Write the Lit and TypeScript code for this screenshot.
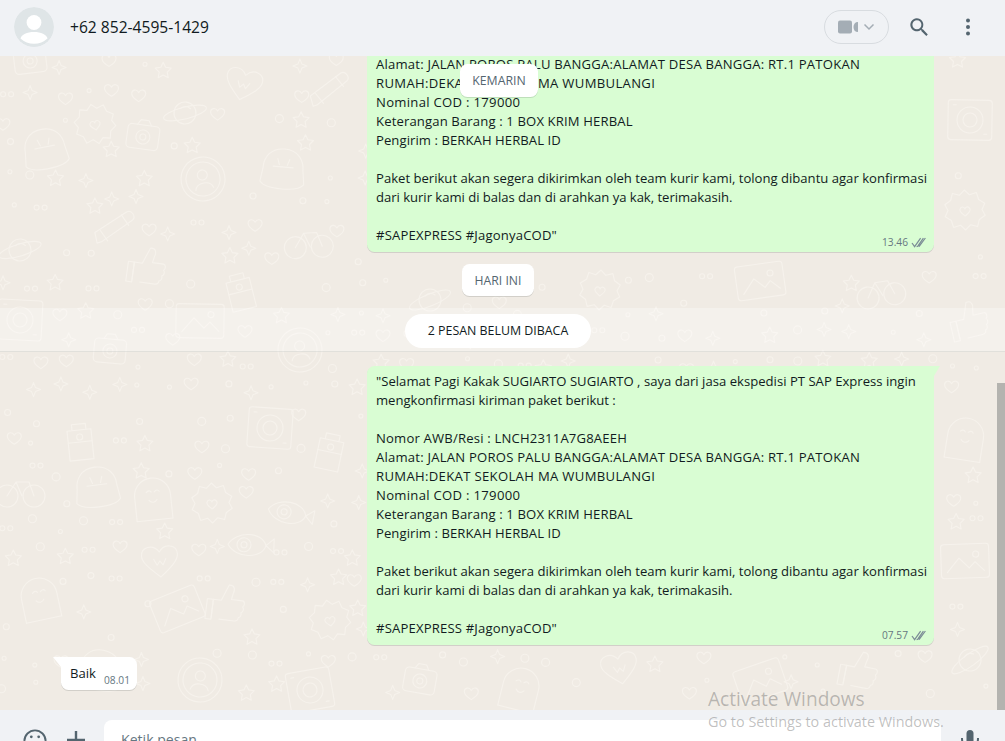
import { LitElement, html, css, svg } from "lit";
import { customElement } from "lit/decorators.js";

type L = [string, number];
const head: L[] = [
  ["Alamat: JALAN POROS PALU BANGGA:ALAMAT DESA BANGGA: RT.1 PATOKAN", 0.22],
  ["RUMAH:DEKAT SEKOLAH MA WUMBULANGI", 0.33],
  ["Nominal COD : 179000", 0.3],
  ["Keterangan Barang : 1 BOX KRIM HERBAL", 0.135],
  ["Pengirim : BERKAH HERBAL ID", 0.07],
  ["", 0],
  ["Paket berikut akan segera dikirimkan oleh team kurir kami, tolong dibantu agar konfirmasi", 0],
  ["dari kurir kami di balas dan di arahkan ya kak, terimakasih.", -0.03],
  ["", 0],
  ['#SAPEXPRESS #JagonyaCOD"', 0.17],
];
const full: L[] = [
  ['"Selamat Pagi Kakak SUGIARTO SUGIARTO , saya dari jasa ekspedisi PT SAP Express ingin', 0.012],
  ["mengkonfirmasi kiriman paket berikut :", -0.02],
  ["", 0],
  ["Nomor AWB/Resi : LNCH2311A7G8AEEH", 0.18],
  ...head,
];

/* doodle library, each drawn around 0,0 */
const big = [
  svg`<circle r="22"/><circle r="17"/><circle cy="-4" r="5"/><path d="M-9 10c2-8 16-8 18 0"/>`,
  svg`<path d="M0 14C-12 4-18-2-18-8c0-9 12-12 18-3 6-9 18-6 18 3 0 6-6 12-18 22z"/><path d="M-6-4l3 6 3-4 3 4 3-6"/>`,
  svg`<rect x="-22" y="-20" width="44" height="40" rx="3"/><circle r="13"/><circle r="7"/><path d="M-17-15h3M14 14h3"/>`,
  svg`<ellipse rx="11" ry="11"/><ellipse rx="22" ry="6" transform="rotate(-22)"/><path d="M-5-4c3-3 7-3 10-1"/>`,
  svg`<rect x="-16" y="-11" width="32" height="24" rx="4"/><path d="M-7-11l3-5h8l3 5"/><circle cy="1" r="7"/><circle cy="1" r="3"/>`,
  svg`<path d="M0-18l5 5 7-2 2 7 6 4-3 6 3 6-6 4-2 7-7-2-5 5-5-5-7 2-2-7-6-4 3-6-3-6 6-4 2-7 7 2z" transform="translate(0 -2)"/><path d="M-5-1c2-4 5-1 5 0 0-1 3-4 5 0 1 3-3 5-5 7-2-2-6-4-5-7z"/>`,
  svg`<path d="M-15 18L-19 8 9-18c4-3 10 3 7 7L-11 16z"/><path d="M-14 5l9 9M4-14l9 9"/>`,
  svg`<path d="M-14 16V-2h8L0-18c5-1 7 3 5 8l-1 6h11c3 0 3 5 1 6 2 2 1 5-1 6 1 2 0 5-2 5 0 3-2 4-4 4H-6"/><path d="M-20-2h6v20h-6z"/>`,
  svg`<rect x="-24" y="-16" width="48" height="34" rx="3" transform="rotate(-8)"/><path d="M-18 12L-6-2 4 8 10 2l9 9" transform="rotate(-8)"/><circle cx="10" cy="-7" r="3"/>`,
  svg`<path d="M-18 20v-24c0-10 8-18 18-18s18 8 18 18v24"/><path d="M-18 20h36M-6-8c2-2 4-2 5 0M2-8c2-2 4-2 5 0M-4 0c2 3 6 3 8 0"/>`,
  svg`<path d="M-22 0c8-14 34-14 38 0-4 14-30 14-38 0zM16 0l8-7v14z"/><circle cx="-6" r="7"/><circle cx="-6" r="3"/>`,
  svg`<circle cx="-13" cy="6" r="11"/><circle cx="14" cy="6" r="11"/><path d="M-13 6l9-14H9l5 14M-4-8l6 14"/>`,
  svg`<path d="M0-20c14 0 20 10 20 20L22 14C16 22-16 22-22 14L-20 0c0-10 6-20 20-20z"/><path d="M-10-2h20M-6-10l2 6M6-10l-2 6"/>`,
  svg`<path d="M-12 20V-10h24v30zM-7-10v-6h14v6"/><path d="M-12 2h24"/><circle cy="-3" r="3"/>`,
];
const small = [
  svg`<circle r="3"/>`,
  svg`<circle r="2"/>`,
  svg`<circle r="4"/>`,
  svg`<path d="M0-7l2 5 5 2-5 2-2 5-2-5-5-2 5-2z"/>`,
  svg`<path d="M0-8l2.400 5 5.600.8-4 4 1 5.600-5-2.700-5 2.700 1-5.600-4-4 5.600-.8z"/>`,
  svg`<path d="M0 6c-5-3-7-6-7-8 0-4 5-5 7-1 2-4 7-3 7 1 0 2-2 5-7 8z"/>`,
  svg`<circle cx="-4" r="2.500"/><circle cx="4" r="2.500"/>`,
];

function rng(seed: number) {
  let s = seed;
  return () => {
    s = (s * 16807) % 2147483647;
    return s / 2147483647;
  };
}

function wall() {
  const r = rng(20231);
  const out: unknown[] = [];
  const placed: [number, number, number][] = [
    [203, 179, 0], [45, 149, 12], [283, 169, 12], [243, 86, 1], [308, 241, 11], [185, 113, 3],
    [143, 136, 4], [95, 124, 5], [115, 228, 6], [148, 266, 7], [270, 428, 2], [153, 500, 9],
    [97, 487, 12], [212, 503, 5], [250, 545, 10], [160, 563, 1], [177, 608, 8], [227, 603, 7],
    [290, 513, 10], [80, 440, 13], [330, 620, 5], [40, 600, 9], [20, 320, 2], [110, 350, 4],
    [200, 320, 8], [300, 350, 0], [970, 120, 2], [965, 210, 5], [970, 320, 7], [965, 440, 9],
    [965, 560, 8], [970, 660, 3], [330, 90, 6], [30, 60, 4], [20, 250, 3], [20, 490, 11],
    [330, 450, 13], [100, 670, 12], [200, 680, 0], [310, 690, 2], [420, 680, 4], [520, 690, 9],
    [620, 670, 1], [760, 680, 8], [860, 670, 7], [430, 300, 3], [600, 290, 5], [760, 280, 8],
    [880, 290, 11], [240, 290, 13],
  ];
  for (const [x, y, k] of placed) {
    out.push(svg`<g transform="translate(${x} ${y}) rotate(${Math.round(r() * 30 - 15)})">${big[k]}</g>`);
  }
  for (let y = 66; y < 710; y += 27) {
    for (let x = 8; x < 1000; x += 27) {
      if (x > 370 && x < 930 && y < 650 && !(y > 255 && y < 365)) continue;
      const px = x + r() * 14 - 7;
      const py = y + r() * 14 - 7;
      const near = placed.some(([a, b]) => Math.hypot(a - px, b - py) < 29);
      if (near || r() < 0.28) continue;
      const k = Math.floor(r() * small.length);
      out.push(svg`<g transform="translate(${px.toFixed(1)} ${(py - 56).toFixed(1)})">${small[k]}</g>`);
    }
  }
  return { out, placed };
}

const W = wall();

@customElement("app-root")
export class AppRoot extends LitElement {
  static styles = css`
    :host {
      display: flex;
      flex-direction: column;
      height: 100vh;
      overflow: hidden;
      position: relative;
      font-family: "Open Sans", "Noto Sans", sans-serif;
      color: #111b21;
      background: #f0ebe4;
    }
    .top {
      flex: none;
      height: 56px;
      box-sizing: border-box;
      background: #f0f2f5;
      display: flex;
      align-items: center;
      padding: 0 25px 2px 14px;
      position: relative;
      z-index: 2;
    }
    .avatar { width: 40px; height: 40px; border-radius: 50%; display: block; }
    .name { margin-left: 16px; font-size: 15.6px; flex: 1; }
    .call {
      width: 65px; height: 34px; box-sizing: border-box;
      border: 1px solid #d8dce0; border-radius: 17px;
      display: flex; align-items: center; justify-content: center; gap: 5px;
      margin-right: 18px;
    }
    .icon-btn { width: 24px; height: 24px; display: block; fill: #54656f; }
    .search { margin-right: 25px; }
    .chat {
      flex: 1; min-height: 0; position: relative; overflow: hidden;
      display: flex; flex-direction: column; justify-content: flex-end;
      padding-bottom: 20px;
    }
    .wall {
      position: absolute; inset: 0; width: 100%; height: 100%;
      fill: none; stroke: #f6f2ec; stroke-width: 1.1;
      stroke-linejoin: round; stroke-linecap: round;
    }
    .flow { position: relative; display: flex; flex-direction: column; }
    .bubble {
      position: relative;
      align-self: flex-start;
      margin-left: 367px;
      width: 567px;
      box-sizing: border-box;
      padding: 6px 7px 7px 9px;
      background: #d9fdd3;
      border-radius: 7.5px;
      box-shadow: 0 1px 0.5px rgba(11, 20, 26, 0.13);
      font-size: 13.1px;
      line-height: 19px;
    }
    .bubble.first { border-top-right-radius: 0; }
    .line { min-height: 19px; white-space: nowrap; }
    .tail { position: absolute; top: 0; right: -6px; width: 6px; height: 10px; fill: #d9fdd3; display: block; }
    .meta {
      position: absolute; right: 7px; bottom: 2px;
      display: flex; align-items: center; gap: 3px;
      font-size: 10.2px; line-height: 15px; color: #667781;
    }
    .check { width: 16px; height: 11px; display: block; fill: none; stroke: #7b8c96; stroke-width: 1.2; }
    .chip-row { display: flex; justify-content: center; margin: 12px 0 12px; padding-right: 9px; }
    .chip {
      background: #fff; border-radius: 7.5px; height: 32px; width: 72px;
      display: flex; align-items: center; justify-content: center;
      font-size: 12.2px; color: #54656f;
      box-shadow: 0 1px 0.5px rgba(11, 20, 26, 0.13);
    }
    .band {
      height: 44px; box-sizing: border-box; margin-bottom: 14px;
      background: rgba(255, 255, 255, 0.3);
      border-bottom: 1px solid rgba(11, 20, 26, 0.08);
      display: flex; align-items: center; justify-content: center; padding: 2px 9px 0 0;
    }
    .pill {
      width: 186px; height: 34px; border-radius: 17px; background: #fff;
      display: flex; align-items: center; justify-content: center;
      font-size: 12.4px; color: #111b21;
    }
    .in {
      position: relative;
      align-self: flex-start;
      margin: 12px 0 0 61px;
      width: 76px; height: 33px; box-sizing: border-box;
      padding: 7px 0 0 9px;
      background: #fff;
      border-radius: 7.5px;
      border-top-left-radius: 0;
      box-shadow: 0 1px 0.5px rgba(11, 20, 26, 0.13);
      font-size: 13.1px; line-height: 19px;
    }
    .in .tail { right: auto; left: -8px; width: 8px; fill: #fff; }
    .in .meta { right: 7px; bottom: 2px; font-size: 10.2px; }
    .sticky {
      position: absolute; top: 8px; left: 460px;
      width: 78px; height: 33px; border-radius: 7.5px; background: #fff;
      display: flex; align-items: center; justify-content: center;
      font-size: 12.3px; color: #54656f;
      box-shadow: 0 1px 0.5px rgba(11, 20, 26, 0.13);
    }
    .scroll { position: absolute; right: 0; bottom: 0; width: 8px; height: 327px; background: #b4b3af; }
    .bottom {
      flex: none; height: 31px; box-sizing: border-box; overflow: hidden;
      background: #f0f2f5; display: flex; align-items: flex-start;
      position: relative; z-index: 2;
    }
    .bi { display: block; flex: none; fill: none; stroke: #54656f; stroke-width: 2; }
    .smile { margin: 19px 0 0 23px; width: 24px; height: 24px; }
    .plus { margin: 18px 0 0 17px; width: 24px; height: 24px; stroke-width: 2.4; }
    .input {
      margin: 10px 0 0 16px; width: 837px; height: 44px; box-sizing: border-box; flex: none;
      background: #fff; border-radius: 8px 8px 0 0; padding: 10px 0 0 17px;
      font-size: 14.1px; line-height: 19px; color: #667781;
    }
    .mic { margin: 18px 0 0 17px; width: 24px; height: 28px; fill: #54656f; display: block; flex: none; }
    .activate {
      position: absolute; left: 708px; top: 687px; z-index: 3;
      color: rgba(90, 90, 90, 0.38); pointer-events: none;
    }
    .a1 { font-size: 19.100px; line-height: 25px; }
    .a2 { font-size: 14.400px; line-height: 20px; white-space: nowrap; }
  `;

  private lines(ls: L[]) {
    return ls.map(
      ([t, s]) => html`<div class="line" style="letter-spacing:${s}px">${t}</div>`
    );
  }

  private check() {
    return html`<svg class="check" viewBox="0 0 16 11"><path d="M1 6l2.600 3.600L9.600 1.200M5.600 9.600L6.800 9.200 12.400 1.200M8 9.600l6.400-8.600"/></svg>`;
  }

  render() {
    return html`
      <div class="top">
        <svg class="avatar" viewBox="0 0 40 40">
          <circle cx="20" cy="20" r="20" fill="#dfe5e7"/>
          <circle cx="20" cy="15.500" r="7.400" fill="#fff"/>
          <path d="M20 25c-7 0-12.500 2.600-13.500 6.500a20 20 0 0 0 27 0C32.500 27.600 27 25 20 25z" fill="#fff"/>
        </svg>
        <div class="name">+62 852-4595-1429</div>
        <div class="call">
          <svg width="20" height="14" viewBox="0 0 20 14"><rect x="0" y="0.500" width="14" height="13" rx="2" fill="#a4adb5"/><path d="M20 2c-3 0-4.500 2-4.500 5s1.500 5 4.500 5z" fill="#a4adb5"/></svg>
          <svg width="12" height="8" viewBox="0 0 12 8"><path d="M1.500 1.500L6 6l4.500-4.500" fill="none" stroke="#a4adb5" stroke-width="1.500"/></svg>
        </div>
        <svg class="icon-btn search" viewBox="0 0 24 24"><path d="M15.900 14.300h-.8l-.3-.3A6.500 6.500 0 1 0 14 14.800l.3.3v.8l5 5 1.500-1.500-4.900-5.100zm-6 0a4.500 4.500 0 1 1 0-9 4.500 4.500 0 0 1 0 9z"/></svg>
        <svg class="icon-btn" viewBox="0 0 24 24"><circle cx="12" cy="5.500" r="2"/><circle cx="12" cy="12" r="2"/><circle cx="12" cy="18.500" r="2"/></svg>
      </div>
      <div class="chat">
        <svg class="wall" aria-hidden="true"><g transform="translate(0 -56)">${W.out.slice(0, W.placed.length)}</g>${W.out.slice(W.placed.length)}</svg>
        <div class="flow">
          <div class="bubble">
            ${this.lines(head)}
            <div class="meta">13.46 ${this.check()}</div>
          </div>
          <div class="chip-row"><div class="chip">HARI INI</div></div>
          <div class="band"><div class="pill">2 PESAN BELUM DIBACA</div></div>
          <div class="bubble first">
            <svg class="tail" viewBox="0 0 6 10"><path d="M0 0h6L0 10z"/></svg>
            ${this.lines(full)}
            <div class="meta">07.57 ${this.check()}</div>
          </div>
          <div class="in">
            <svg class="tail" viewBox="0 0 8 10" preserveAspectRatio="none"><path d="M8 0H0l8 10z"/></svg>
            Baik
            <div class="meta">08.01</div>
          </div>
        </div>
        <div class="sticky">KEMARIN</div>
        <div class="scroll"></div>
      </div>
      <div class="bottom">
        <svg class="bi smile" viewBox="0 0 26 26"><circle cx="13" cy="13" r="11.500"/><circle cx="9" cy="8.500" r="1.500" fill="#54656f" stroke="none"/><circle cx="17" cy="8.500" r="1.500" fill="#54656f" stroke="none"/></svg>
        <svg class="bi plus" viewBox="0 0 24 24"><path d="M12 3v18M3 12h18"/></svg>
        <div class="input">Ketik pesan</div>
        <svg class="mic" viewBox="0 0 24 28"><rect x="8.500" y="2" width="7" height="16" rx="3.500"/><path d="M4 10c0 7 3.500 10 8 10s8-3 8-10" fill="none" stroke="#54656f" stroke-width="2"/></svg>
      </div>
      <div class="activate">
        <div class="a1">Activate Windows</div>
        <div class="a2">Go to Settings to activate Windows.</div>
      </div>
    `;
  }
}
